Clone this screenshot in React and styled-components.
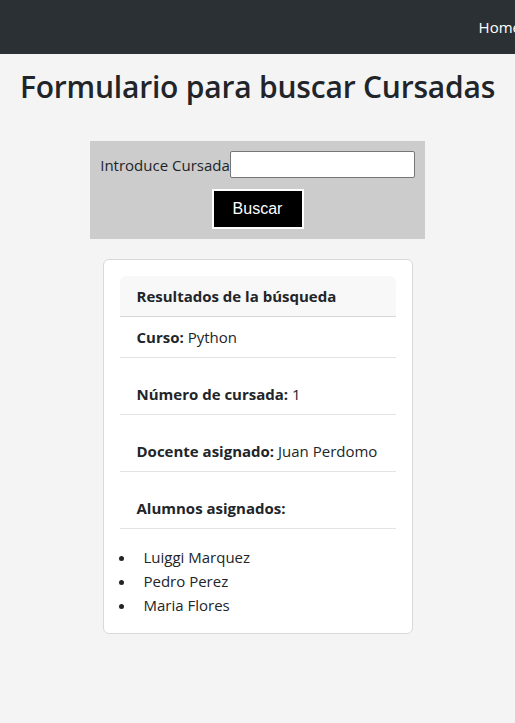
import React from "react";
import styled, { createGlobalStyle } from "styled-components";

const GlobalStyle = createGlobalStyle`
    html, body {
        margin: 0;
        padding: 0;
        background: #f4f4f4;
    }
    body {
        font-family: "Open Sans", "Noto Sans", sans-serif;
        font-size: 15px;
        color: #212529;
    }
`;

const alumnos = ["Luiggi Marquez", "Pedro Perez", "Maria Flores"];

const App = () => {
    return (
        <>
            <GlobalStyle />
            <NavBar>
                <NavLink href="#">Home</NavLink>
            </NavBar>
            <Main>
                <Title>Formulario para buscar Cursadas</Title>
                <SearchForm onSubmit={(e) => e.preventDefault()}>
                    <FieldRow>
                        <Label htmlFor="cursada">Introduce Cursada</Label>
                        <Input id="cursada" type="text" />
                    </FieldRow>
                    <SubmitButton type="submit">Buscar</SubmitButton>
                </SearchForm>
                <Card>
                    <ResultList>
                        <ResultHeader>Resultados de la búsqueda</ResultHeader>
                        <ResultItem>
                            <b>Curso:</b> Python
                        </ResultItem>
                        <ResultItem $spaced>
                            <b>Número de cursada:</b> 1
                        </ResultItem>
                        <ResultItem $spaced>
                            <b>Docente asignado:</b> Juan Perdomo
                        </ResultItem>
                        <ResultItem $spaced>
                            <b>Alumnos asignados:</b>
                        </ResultItem>
                    </ResultList>
                    <StudentList>
                        {alumnos.map((a) => (
                            <li key={a}>{a}</li>
                        ))}
                    </StudentList>
                </Card>
            </Main>
        </>
    );
};

const NavBar = styled.nav`
    height: 54px;
    background: #2b3035;
    display: flex;
    align-items: center;
    justify-content: flex-end;
    overflow: hidden;
    white-space: nowrap;
`;

const NavLink = styled.a`
    color: #fff;
    text-decoration: none;
    font-size: 15px;
    margin-right: -6px;
`;

const Main = styled.main`
    display: flex;
    flex-direction: column;
    align-items: center;
    padding-bottom: 40px;
`;

const Title = styled.h1`
    font-size: 30px;
    font-weight: 600;
    margin: 15px 0 36px;
    line-height: 1.2;
    text-align: center;
    white-space: nowrap;
    letter-spacing: -0.2px;
`;

const SearchForm = styled.form`
    width: 335px;
    box-sizing: border-box;
    background: #cccccc;
    padding: 10px 10px 10px;
    display: flex;
    flex-direction: column;
    align-items: center;
    gap: 11px;
`;

const FieldRow = styled.div`
    display: flex;
    align-items: center;
`;

const Label = styled.label`
    font-size: 15px;
`;

const Input = styled.input`
    width: 185px;
    height: 27px;
    box-sizing: border-box;
    border: 1px solid #767676;
    border-radius: 2px;
    background: #fff;
`;

const SubmitButton = styled.button`
    width: 92px;
    height: 40px;
    background: #000;
    color: #fff;
    border: 2px solid #fff;
    font-family: "Liberation Sans", Arial, sans-serif;
    font-size: 16px;
    cursor: pointer;
`;

const Card = styled.div`
    margin-top: 20px;
    width: 310px;
    box-sizing: border-box;
    background: #fff;
    border: 1px solid #d9d9d9;
    border-radius: 6px;
    padding: 16px;
`;

const ResultList = styled.div`
    display: flex;
    flex-direction: column;
`;

const ResultHeader = styled.div`
    background: #f8f8f8;
    border-bottom: 1px solid #d6d6d6;
    border-radius: 6px 6px 0 0;
    padding: 9px 17px;
    font-weight: 700;
    line-height: 22px;
`;

const ResultItem = styled.div`
    border-bottom: 1px solid #e3e3e3;
    padding: ${(p) => (p.$spaced ? "25px" : "9px")} 17px 9px;
    line-height: 22px;
    b {
        font-weight: 700;
    }
`;

const StudentList = styled.ul`
    margin: 16px 0 0;
    padding-left: 16px;
    li {
        line-height: 24px;
        padding-left: 8px;
    }
`;

export default App;
